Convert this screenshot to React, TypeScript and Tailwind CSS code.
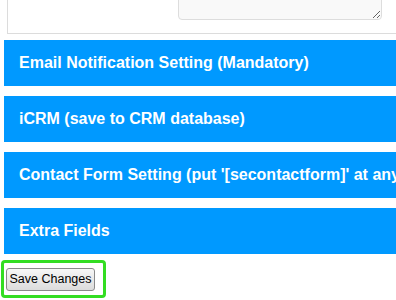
import React from "react";

const bars = [
  "Email Notification Setting (Mandatory)",
  "iCRM (save to CRM database)",
  "Contact Form Setting (put '[secontactform]' at any page or post)",
  "Extra Fields",
];

export default function App() {
  return (
    <div
      className="w-[396px] h-[300px] overflow-hidden bg-white"
      style={{ fontFamily: '"Liberation Sans", Arial, sans-serif' }}
    >
      <div className="ml-[7px] w-[420px] h-[34px] border-x border-b border-[#dcdcdc] flex items-end pb-[13px]">
        <textarea
          className="ml-[170px] w-[204px] h-[60px] shrink-0 border border-[#dddddd] rounded-[4px] bg-[#f9f9f9] outline-none"
          defaultValue=""
        />
      </div>
      <div className="mt-[6px] flex flex-col gap-[10px] ml-[4px] w-[420px]">
        {bars.map((t) => (
          <div
            key={t}
            className="h-[46px] bg-[#0099ff] flex items-center pl-[15px] text-white font-bold text-[16px] whitespace-nowrap"
          >
            {t}
          </div>
        ))}
      </div>
      <div className="mt-[6px] ml-[1px] inline-flex border-[3px] border-[#33dd22] rounded-[4px] pl-[2px] pt-[5px] pb-[4px] pr-[8px]">
        <button className="h-[23px] w-[89px] border border-[#8a8a8a] rounded-[3px] bg-gradient-to-b from-[#f7f7f7] to-[#dcdcdc] text-[12.5px] text-black leading-none">
          Save Changes
        </button>
      </div>
    </div>
  );
}
